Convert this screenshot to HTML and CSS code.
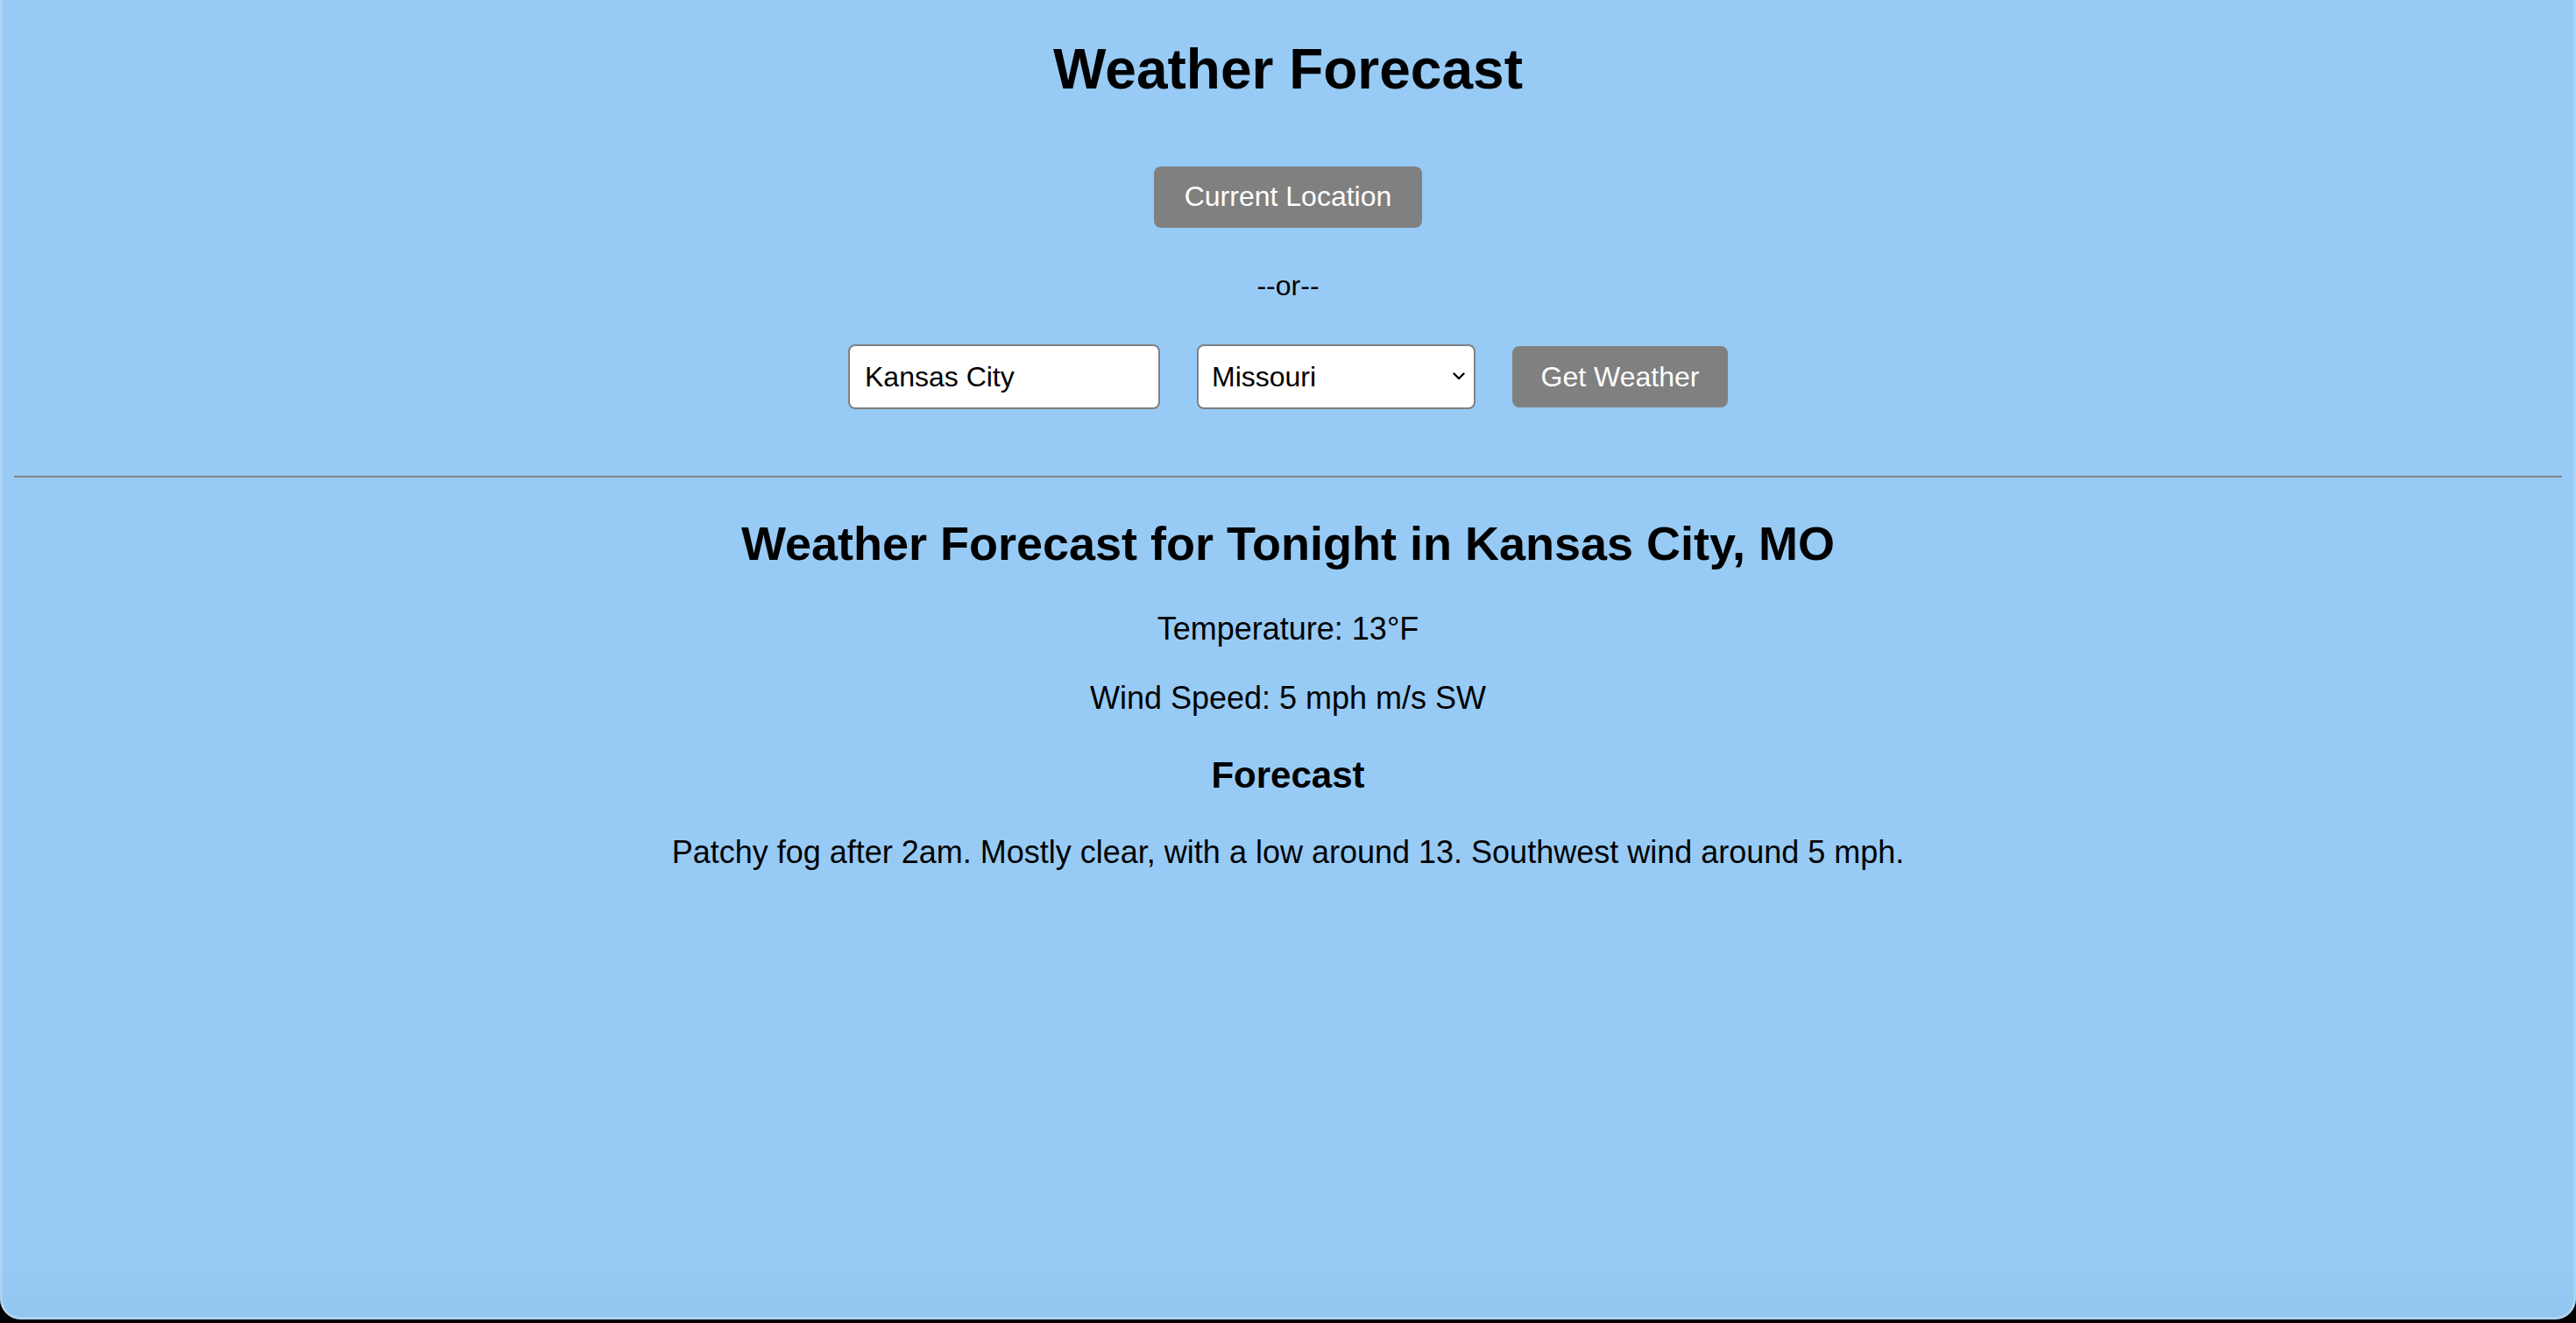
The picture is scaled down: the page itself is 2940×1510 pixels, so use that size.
FILE: index.html
```html
<!DOCTYPE html>
<html lang="en">
<head>
<meta charset="utf-8">
<title>Weather Forecast</title>
<link rel="stylesheet" href="styles.css">
</head>
<body>
<div class="window">
  <main class="page">
    <h1 class="title">Weather Forecast</h1>
    <div class="locate">
      <button class="btn btn-locate" type="button">Current Location</button>
    </div>
    <p class="or">--or--</p>
    <form class="search">
      <input class="city" type="text" value="Kansas City">
      <div class="select-wrap">
        <select class="state">
          <option>Missouri</option>
        </select>
        <svg class="chevron" width="14" height="9" viewBox="0 0 14 9" aria-hidden="true">
          <path d="M1.5 1.5 L7 7 L12.5 1.5" fill="none" stroke="#000" stroke-width="2.4" stroke-linecap="round" stroke-linejoin="round"/>
        </svg>
      </div>
      <button class="btn btn-get" type="button">Get Weather</button>
    </form>
    <hr class="divider">
    <section class="result">
      <h2 class="result-title">Weather Forecast for Tonight in Kansas City, MO</h2>
      <p class="stat stat-temp">Temperature: 13°F</p>
      <p class="stat stat-wind">Wind Speed: 5 mph m/s SW</p>
      <h3 class="result-sub">Forecast</h3>
      <p class="stat stat-desc">Patchy fog after 2am. Mostly clear, with a low around 13. Southwest wind around 5 mph.</p>
    </section>
  </main>
</div>
</body>
</html>
```

FILE: styles.css
```css
html, body {
  margin: 0;
  padding: 0;
  background: #000;
}

body {
  font-family: "Liberation Sans", Arial, Helvetica, sans-serif;
  color: #000;
}

.window {
  height: 1506px;
  background: linear-gradient(to bottom, #97cbf5 0%, #97cbf5 95%, #92c6f0 100%);
  border-radius: 0 0 24px 24px;
  box-shadow: inset 3px 0 0 rgba(255, 255, 255, 0.2), inset -3px 0 0 rgba(255, 255, 255, 0.2), inset 0 -3px 0 rgba(255, 255, 255, 0.25);
  overflow: hidden;
}

.page {
  padding: 42px 16px 0;
  text-align: center;
}

.title {
  margin: 0;
  font-size: 64px;
  line-height: 74px;
  font-weight: bold;
}

.locate {
  margin-top: 74px;
  display: flex;
  justify-content: center;
}

.btn {
  font-family: "Liberation Sans", Arial, Helvetica, sans-serif;
  font-size: 32px;
  line-height: 37px;
  color: #fff;
  background: #808080;
  border: none;
  border-radius: 8px;
  padding: 16px 32px 17px;
  cursor: pointer;
}

.btn-locate {
  width: 306px;
}

.or {
  margin: 48px 0 0;
  font-size: 32px;
  line-height: 37px;
}

.search {
  margin-top: 48px;
  display: flex;
  justify-content: center;
  align-items: center;
  gap: 42px;
}

.city,
.state {
  box-sizing: border-box;
  height: 74px;
  font-family: "Liberation Sans", Arial, Helvetica, sans-serif;
  font-size: 32px;
  color: #000;
  background: #fff;
  border: 2px solid #808080;
  border-radius: 8px;
  outline: none;
}

.city {
  width: 356px;
  padding: 0 17px;
}

.select-wrap {
  position: relative;
  display: flex;
}

.state {
  width: 318px;
  padding: 0 40px 0 15px;
  appearance: none;
  -webkit-appearance: none;
}

.chevron {
  position: absolute;
  right: 12px;
  top: 32px;
  pointer-events: none;
}

.btn-get {
  width: 246px;
  height: 70px;
  padding: 0;
}

.divider {
  margin: 76px 0 0;
  border: none;
  border-top: 2px solid #888;
  height: 0;
}

.result {
  font-size: 36px;
}

.result-title {
  margin: 44px 0 0;
  font-size: 54px;
  line-height: 62px;
  font-weight: bold;
}

.stat {
  margin: 0;
  font-size: 36px;
  line-height: 41px;
}

.stat-temp {
  margin-top: 46px;
}

.stat-wind {
  margin-top: 38px;
}

.result-sub {
  margin: 44px 0 0;
  font-size: 42px;
  line-height: 48px;
  font-weight: bold;
}

.stat-desc {
  margin-top: 43px;
}
```
